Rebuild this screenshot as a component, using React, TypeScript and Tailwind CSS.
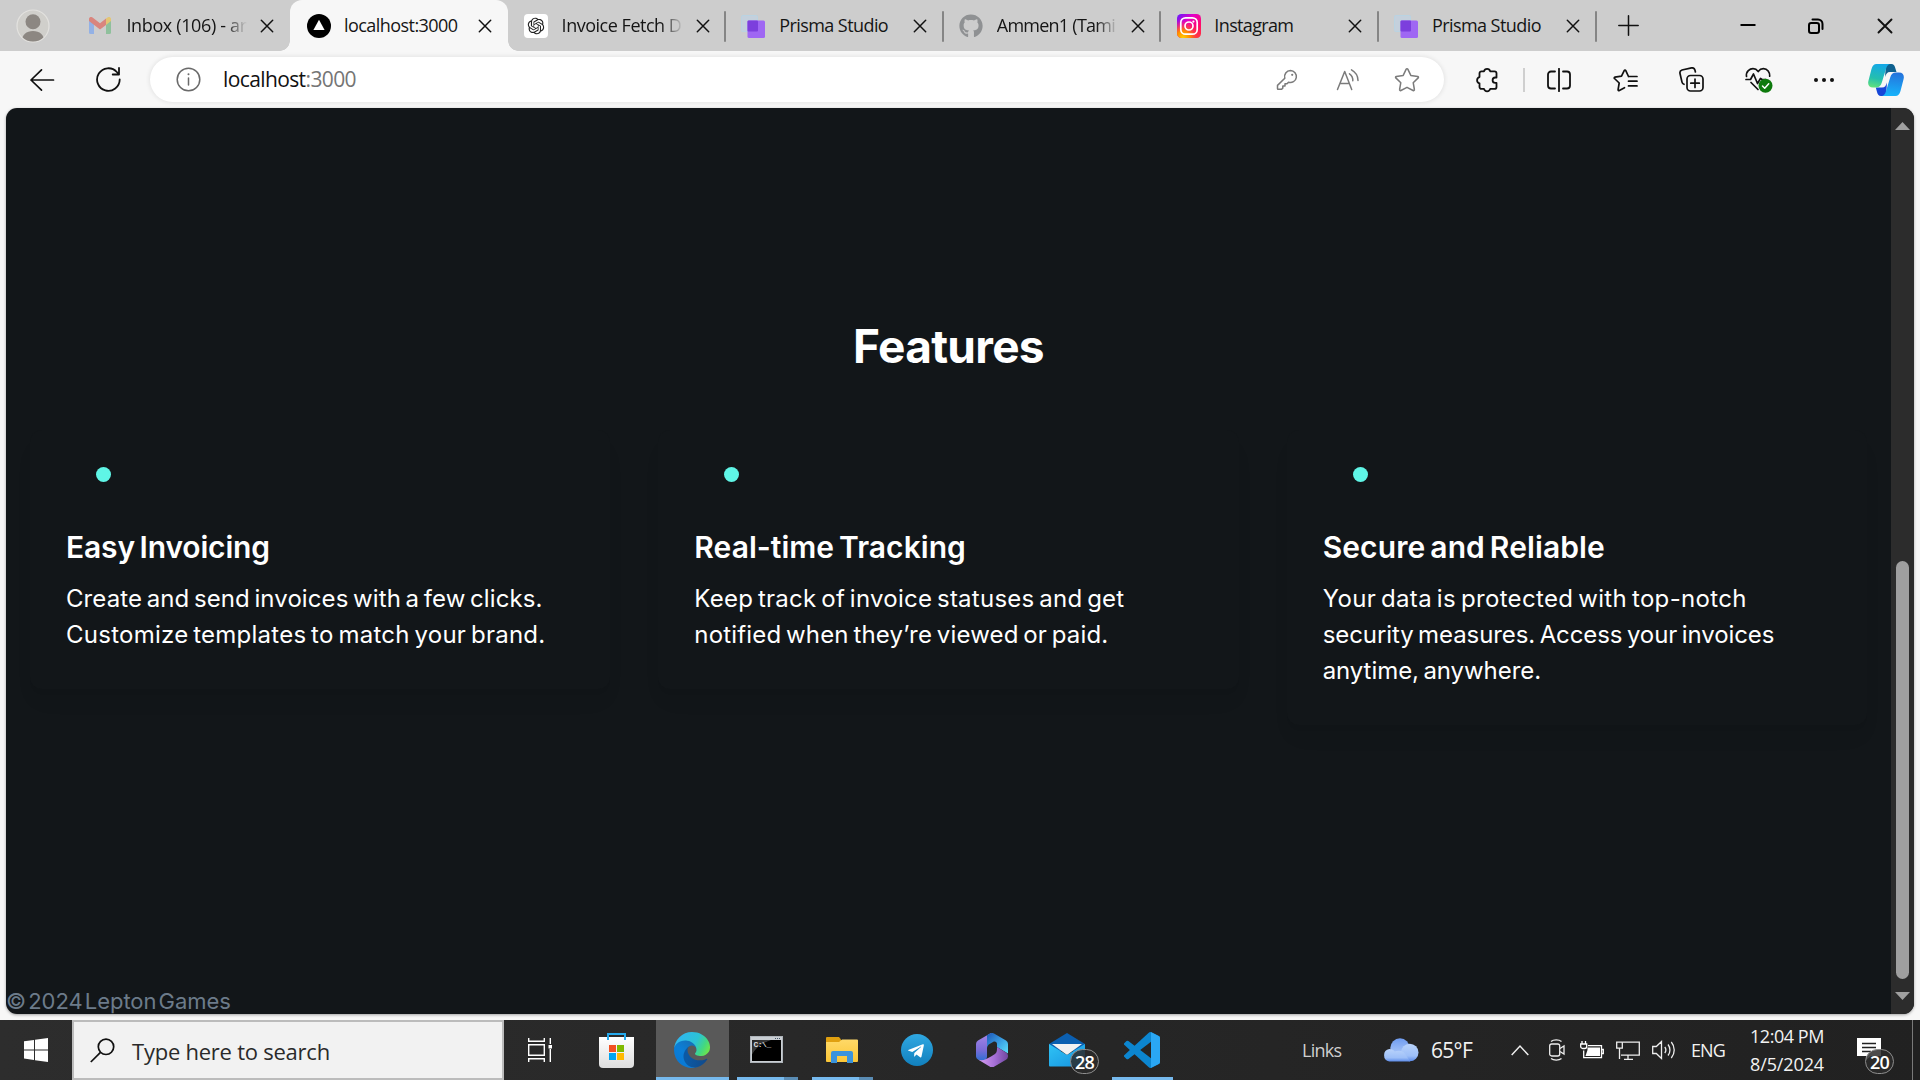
import type { ReactNode } from "react";
import { FaGithub, FaTelegramPlane } from "react-icons/fa";
import { RiOpenaiFill } from "react-icons/ri";

type TabInfo = { title: string; icon: ReactNode; tracking: string; active?: boolean; divider?: boolean; fade?: boolean };

function GmailIcon() {
  return (
    <svg width="22" height="17" viewBox="0 0 22 17" opacity="0.6">
      <path d="M0 2v13.5A1.5 1.5 0 0 0 1.5 17H5V6z" fill="#6da0f5" />
      <path d="M22 2v13.5a1.5 1.5 0 0 1-1.5 1.5H17V6z" fill="#67b97c" />
      <path d="M17 1.5V8l5-4V2c0-2-2.200-2.600-3.600-1.500z" fill="#f3c13a" />
      <path d="M0 2C0 0 2.200-.6 3.600.5L11 6.200 17 1.500V8l-6 4.600L0 4z" fill="#e2564b" />
    </svg>
  );
}

function NextIcon() {
  return (
    <svg width="24" height="24" viewBox="0 0 24 24">
      <circle cx="12" cy="12" r="12" fill="#000" />
      <path d="M12 5.800 17.600 16H6.400z" fill="#fff" />
    </svg>
  );
}

function OpenAiIcon() {
  return (
    <span className="-ml-px flex size-6 items-center justify-center rounded-[4px] bg-white">
      <RiOpenaiFill size={20} color="#222" />
    </span>
  );
}

function PrismaIcon() {
  return (
    <svg className="-ml-px" width="24" height="24" viewBox="0 0 24 24">
      <rect x="0.500" y="1.500" width="16" height="16" rx="1" fill="#c4d0dc" stroke="#b9d3e2" />
      <rect x="6.500" y="6.500" width="17.500" height="17.500" rx="1.500" fill="#9f67f3" />
      <rect x="6.500" y="6.500" width="10.500" height="11" rx="1" fill="#7c3fdd" />
    </svg>
  );
}

function InstagramIcon() {
  return (
    <svg width="24" height="24" viewBox="0 0 24 24" fill="none">
      <defs>
        <linearGradient id="ig-base" x1="0" y1="0" x2="1" y2="1">
          <stop offset="0" stopColor="#5b1cff" />
          <stop offset="0.35" stopColor="#e400c8" />
          <stop offset="0.7" stopColor="#ff0a6c" />
          <stop offset="1" stopColor="#ff3a3a" />
        </linearGradient>
        <radialGradient id="ig-glow" cx="0.25" cy="1" r="0.75">
          <stop offset="0" stopColor="#ffd000" />
          <stop offset="0.4" stopColor="#ff8a00" />
          <stop offset="1" stopColor="#ff2a50" stopOpacity="0" />
        </radialGradient>
      </defs>
      <rect width="24" height="24" rx="4.500" fill="url(#ig-base)" />
      <rect width="24" height="24" rx="4.500" fill="url(#ig-glow)" />
      <rect x="3.800" y="3.800" width="16.400" height="16.400" rx="4.800" stroke="#fff" strokeWidth="1.700" />
      <circle cx="12" cy="12" r="4" stroke="#fff" strokeWidth="1.700" />
      <circle cx="16.400" cy="7.600" r="1.100" fill="#fff" />
    </svg>
  );
}

const tabs: TabInfo[] = [
  { title: "Inbox (106) - ar", icon: <GmailIcon />, tracking: "tracking-[-0.36px]", fade: true },
  { title: "localhost:3000", icon: <NextIcon />, tracking: "tracking-[-0.55px]", active: true },
  { title: "Invoice Fetch D", icon: <OpenAiIcon />, tracking: "tracking-[-0.48px]", divider: true, fade: true },
  { title: "Prisma Studio", icon: <PrismaIcon />, tracking: "tracking-[-0.57px]", divider: true },
  { title: "Ammen1 (Tami", icon: <FaGithub className="-ml-px" size={24} color="#8f9193" />, tracking: "tracking-[-0.75px]", divider: true, fade: true },
  { title: "Instagram", icon: <InstagramIcon />, tracking: "tracking-[-0.65px]", divider: true },
  { title: "Prisma Studio", icon: <PrismaIcon />, tracking: "tracking-[-0.57px]", divider: true },
];

function Cross({ size, stroke }: { size: number; stroke: number }) {
  return (
    <svg width={size} height={size} viewBox="0 0 16 16" stroke="#111" strokeWidth={stroke} strokeLinecap="round">
      <path d="M1.500 1.500l13 13M14.500 1.500l-13 13" />
    </svg>
  );
}

function Tab({ tab }: { tab: TabInfo }) {
  return (
    <div className={`relative flex h-[51px] w-[217.6px] shrink-0 items-center pl-[17px] ${tab.active ? "z-10 rounded-t-[12px] bg-[#f7f7f7]" : ""}`}>
      {tab.active && (
        <>
          <span className="absolute -left-[10px] bottom-0 size-[10px] bg-[radial-gradient(circle_at_0_0,transparent_9.500px,#f7f7f7_10px)]" />
          <span className="absolute -right-[10px] bottom-0 size-[10px] bg-[radial-gradient(circle_at_100%_0,transparent_9.500px,#f7f7f7_10px)]" />
        </>
      )}
      <span className="flex w-6 justify-start">{tab.icon}</span>
      <span
        className={`-mt-px ml-[13px] w-[121px] text-[18px] leading-6 whitespace-nowrap text-[#151515] ${tab.fade ? "[mask-image:linear-gradient(to_right,black_82%,transparent_100%)]" : ""} ${tab.tracking}`}
      >
        {tab.title}
      </span>
      <span className="ml-[13px] flex">
        <Cross size={14} stroke={1.700} />
      </span>
      {tab.divider && <span className="absolute -right-px top-[11px] h-[31px] w-[2px] rounded bg-[#858585]" />}
    </div>
  );
}

function TabBar() {
  return (
    <div className="flex h-[51px] items-center bg-[#cdcdcd]">
      <div className="flex w-[72.4px] shrink-0 justify-start pl-4">
        <svg width="34" height="34" viewBox="0 0 34 34">
          <defs>
            <clipPath id="avatar-clip">
              <circle cx="17" cy="17" r="15.500" />
            </clipPath>
          </defs>
          <circle cx="17" cy="17" r="16" fill="#d0cfcb" stroke="#e3e2df" strokeWidth="1.200" />
          <g clipPath="url(#avatar-clip)" fill="#8c8782">
            <circle cx="17" cy="12.700" r="7.500" />
            <path d="M5.500 34c0-8 4.500-12 11.500-12s11.500 4 11.500 12z" />
          </g>
        </svg>
      </div>
      {tabs.map((tab, i) => (
        <Tab key={i} tab={tab} />
      ))}
      <svg className="-mt-px ml-[22px] shrink-0" width="21" height="21" viewBox="0 0 21 21" stroke="#111" strokeWidth="1.500" strokeLinecap="round">
        <path d="M10.500 .8v19.400M.8 10.500h19.400" />
      </svg>
      <svg className="-mt-px ml-[101px] shrink-0" width="16" height="16" viewBox="0 0 16 16" stroke="#000" strokeWidth="2">
        <path d="M.5 8h15" />
      </svg>
      <svg className="ml-[51px] shrink-0" width="18" height="16" viewBox="0 0 18 16" fill="none" stroke="#000" strokeWidth="2" strokeLinecap="round">
        <rect x="2" y="5" width="10" height="10" rx="2.200" />
        <path d="M5.500 1.500H11a4.500 4.500 0 0 1 4.500 4.500v5" />
      </svg>
      <span className="ml-[52px] flex">
        <Cross size={16} stroke={1.900} />
      </span>
    </div>
  );
}

function Toolbar() {
  return (
    <div className="flex h-[57px] items-start bg-[#f7f7f7] pt-[6px]">
      <div className="flex h-[45px] w-[84px] items-center justify-center">
        <svg width="26" height="24" viewBox="0 0 26 24" fill="none" stroke="#111" strokeWidth="1.700" strokeLinecap="round" strokeLinejoin="round">
          <path d="M24.500 12H2M12.500 1.800 2 12l10.500 10.200" />
        </svg>
      </div>
      <div className="flex h-[45px] w-12 items-center justify-center">
        <svg width="25" height="25" viewBox="0 0 25 25" fill="none" stroke="#111" strokeWidth="1.800" strokeLinecap="round" strokeLinejoin="round">
          <path d="M23.700 12.500A11.300 11.300 0 1 1 20.800 5L23 7.500M23 1v6.500h-6.300" />
        </svg>
      </div>
      <div className="ml-[18px] flex h-[45px] w-[1294px] shrink-0 items-center rounded-full bg-white pl-[26px] shadow-[0_0_4px_1px_rgba(0,0,0,0.08)]">
        <svg width="25" height="25" viewBox="0 0 25 25" fill="none" stroke="#6a6a6a" strokeWidth="1.500">
          <circle cx="12.500" cy="12.500" r="11.300" />
          <path d="M12.500 11v7" strokeLinecap="round" />
          <circle cx="12.500" cy="7.300" r="1" fill="#6a6a6a" stroke="none" />
        </svg>
        <span className="ml-[22px] -mt-[2px] text-[21px] leading-8 tracking-[-0.61px] text-[#111]">
          localhost<span className="text-[#757575]">:3000</span>
        </span>
        <div className="mr-[24px] ml-auto flex items-center text-[#7b7b7b]">
          <svg width="22" height="22" viewBox="0 0 22 22" fill="none" stroke="currentColor" strokeWidth="1.500" strokeLinejoin="round">
            <path d="M14.500 1.500a6 6 0 1 1-2 11.700L11 14.700H9v2.200H6.800v2.200l-1.200 1.200H2.200a.7.700 0 0 1-.7-.7v-3.200l7.300-7.200a6 6 0 0 1 5.700-7.700z" />
            <circle cx="16.200" cy="5.800" r="1.100" fill="currentColor" stroke="none" />
          </svg>
          <svg className="ml-[38px]" width="24" height="23" viewBox="0 0 24 23" fill="none" stroke="currentColor" strokeWidth="1.500" strokeLinecap="round" strokeLinejoin="round">
            <path d="M1.500 21.500 8.700 3.500l7 18M4 15.500h9.300M13.500 5.800a8 8 0 0 1 3.300 7M15.500 1.800c4 2.200 6.500 6.200 6.500 10.700" />
          </svg>
          <svg className="ml-[34px]" width="26" height="25" viewBox="0 0 26 25" fill="none" stroke="currentColor" strokeWidth="1.500" strokeLinejoin="round">
            <path d="M12.200 2.200a.9.900 0 0 1 1.600 0l3 6.200 6.900 1a.9.900 0 0 1 .5 1.500l-5 4.800 1.200 6.800a.9.900 0 0 1-1.300 1L13 20.300l-6.100 3.200a.9.900 0 0 1-1.300-1l1.200-6.800-5-4.800a.9.900 0 0 1 .5-1.500l6.900-1z" />
          </svg>
        </div>
      </div>
      <div className="flex h-[45px] shrink-0 items-center">
        <svg className="ml-[31px]" width="24" height="26" viewBox="0 0 24 26" fill="none" stroke="#111" strokeWidth="1.800" strokeLinejoin="round">
          <path d="M9 4.300a3.200 3.200 0 0 1 6.200 0h4.300a2 2 0 0 1 2 2v4.200h-1.200a2.700 2.700 0 0 0 0 5.400h1.200v4a2 2 0 0 1-2 2h-4.300a3.200 3.200 0 0 1-6.200 0H6.500a2 2 0 0 1-2-2v-3.600a3.200 3.200 0 0 1 0-6.200V6.300a2 2 0 0 1 2-2z" />
        </svg>
        <span className="ml-[24px] h-6 w-[2px] bg-[#cfcfcf]" />
        <svg className="ml-[22px]" width="24" height="24" viewBox="0 0 24 24" fill="none" stroke="#111" strokeWidth="1.800" strokeLinecap="round">
          <path d="M12 .8v22.400M8 3.500H4a3 3 0 0 0-3 3v11a3 3 0 0 0 3 3h4M16 3.500h4a3 3 0 0 1 3 3v11a3 3 0 0 1-3 3h-4" />
        </svg>
        <svg className="ml-[42px]" width="25" height="24" viewBox="0 0 25 24" fill="none" stroke="#111" strokeWidth="1.700" strokeLinecap="round" strokeLinejoin="round">
          <path d="M15.500 8.500 12.800 2.600a.9.900 0 0 0-1.600 0L8.500 8.200l-6.600.9a.8.800 0 0 0-.4 1.400l4.700 4.500-1.100 6.700a.8.800 0 0 0 1.200.8l5.200-2.800M15.500 8.500h8.500M15.500 13.200h8.500M15.500 17.900h8.500" />
        </svg>
        <svg className="ml-[41px]" width="25" height="25" viewBox="0 0 25 25" fill="none" stroke="#111" strokeWidth="1.700" strokeLinecap="round" strokeLinejoin="round">
          <rect x="8" y="8.500" width="16" height="15.500" rx="3.500" />
          <path d="M16 12v8.500M11.800 16.200h8.500M5 17.300a3 3 0 0 1-2-2.200L1 6.500a3 3 0 0 1 2-3.500L12.500.9A3 3 0 0 1 16 3.200l.4 1.800" />
        </svg>
        <svg className="ml-[41px]" width="28" height="26" viewBox="0 0 28 26" fill="none" stroke="#111" strokeWidth="1.700" strokeLinecap="round" strokeLinejoin="round">
          <path d="M1.500 9.500c-.8-5.500 3.500-7.800 6.500-7.800 2.200 0 4 1.200 5.200 2.800 1.200-1.600 3-2.800 5.200-2.800 4 0 6.600 3.500 6.300 7.500M1 12.500h4.500L8.500 7l4 9.500 3-5 1.500 1h4M6 15.500l7 7" />
          <circle cx="20.500" cy="18.800" r="7" fill="#0e7a0d" stroke="none" />
          <path d="M17.500 19l2.200 2.200 4-4.400" stroke="#fff" strokeWidth="1.500" />
        </svg>
        <svg className="ml-[39px]" width="24" height="6" viewBox="0 0 24 6" fill="#111">
          <circle cx="4" cy="3" r="2" />
          <circle cx="12" cy="3" r="2" />
          <circle cx="20" cy="3" r="2" />
        </svg>
        <svg className="ml-[32px]" width="36" height="32" viewBox="0 0 36 32">
          <defs>
            <linearGradient id="cp-left" x1="0.4" y1="0" x2="0.2" y2="1">
              <stop offset="0" stopColor="#14a9e6" />
              <stop offset="0.6" stopColor="#24bfae" />
              <stop offset="1" stopColor="#63e27a" />
            </linearGradient>
            <linearGradient id="cp-right" x1="0.5" y1="0" x2="0.4" y2="1">
              <stop offset="0" stopColor="#2573dc" />
              <stop offset="1" stopColor="#16b4fb" />
            </linearGradient>
          </defs>
          <path d="M18 0h5.500c2 0 3 1.500 3.600 3.500L28.500 8H22c-3 0-4 2-5 5z" fill="#0f618f" />
          <path d="M18 32h-5c-2.500 0-3.500-2-4-4l-1.200-4.500H14c3 0 4-2 5-5z" fill="#1646d8" />
          <path d="M8.500 0H22c-2 .5-3 2-3.700 4l-4.500 14.500c-1 3.200-2.600 5-5.800 5H5c-4 0-5.500-3-4.600-6.500L3.500 5C4.500 1.500 6 0 8.500 0z" fill="url(#cp-left)" />
          <path d="M27.500 32H14c2-.5 3-2 3.700-4l4.500-14.500c1-3.200 2.600-5 5.800-5h3c4 0 5.500 3 4.600 6.500L32.500 27c-1 3.500-2.500 5-5 5z" fill="url(#cp-right)" />
        </svg>
      </div>
    </div>
  );
}

type Line = { text: string; tracking: string };
const features: { title: Line; lines: Line[] }[] = [
  {
    title: { text: "Easy Invoicing", tracking: "tracking-[-0.16px]" },
    lines: [
      { text: "Create and send invoices with a few clicks.", tracking: "tracking-[0.09px]" },
      { text: "Customize templates to match your brand.", tracking: "tracking-[0.25px]" },
    ],
  },
  {
    title: { text: "Real-time Tracking", tracking: "tracking-[0.04px]" },
    lines: [
      { text: "Keep track of invoice statuses and get", tracking: "tracking-[0.25px]" },
      { text: "notified when they’re viewed or paid.", tracking: "tracking-[0.17px]" },
    ],
  },
  {
    title: { text: "Secure and Reliable", tracking: "tracking-[0.1px]" },
    lines: [
      { text: "Your data is protected with top-notch", tracking: "tracking-[0.34px]" },
      { text: "security measures. Access your invoices", tracking: "tracking-[-0.08px]" },
      { text: "anytime, anywhere.", tracking: "tracking-[-0.06px]" },
    ],
  },
];

function Page() {
  return (
    <div className="h-[912px] bg-[#f7f7f7] px-[6px]">
      <div className="flex h-[906px] overflow-hidden rounded-[11px] bg-[#121619] font-['Inter',sans-serif] text-white shadow-[0_1px_3px_rgba(0,0,0,0.35)]">
        <main className="flex w-[1885px] flex-col">
          <h1 className="mt-[208px] text-center text-[46px] leading-[60px] font-bold tracking-[-0.7px]">Features</h1>
          <div className="mt-[54px] grid grid-cols-3 items-start gap-12 px-6">
            {features.map((f) => (
              <section key={f.title.text} className="rounded-[12px] bg-[#121619] p-9 shadow-[0_15px_22px_-5px_rgba(0,0,0,0.05),0_6px_9px_-6px_rgba(0,0,0,0.06)]">
                <div className="mt-px ml-[30px] size-[15px] rounded-full bg-[#5ff5e6]" />
                <h2 className={`mt-[44px] text-[30px] leading-[42px] font-semibold [word-spacing:-2.7px] ${f.title.tracking}`}>{f.title.text}</h2>
                <p className="mt-[13px] text-[24px] leading-9 [word-spacing:-2.2px]">
                  {f.lines.map((l) => (
                    <span key={l.text} className={`block whitespace-nowrap ${l.tracking}`}>
                      {l.text}
                    </span>
                  ))}
                </p>
              </section>
            ))}
          </div>
          <footer className="mt-auto h-[28px] text-[22px] leading-[30px] tracking-[-0.04px] text-[#6c7b8a] [word-spacing:-4px]">© 2024 Lepton Games</footer>
        </main>
        <div className="flex w-[23px] flex-col items-center bg-[#2c2c2c]">
          <svg className="mt-[14px]" width="15" height="8" viewBox="0 0 15 8" fill="#a0a0a0">
            <path d="M7.500 0 15 8H0z" />
          </svg>
          <div className="mt-[431px] mr-[1px] h-[418px] w-[13px] rounded-full bg-[#9f9f9f]" />
          <svg className="mt-[13px]" width="15" height="8" viewBox="0 0 15 8" fill="#a0a0a0">
            <path d="M7.500 8 0 0h15z" />
          </svg>
        </div>
      </div>
    </div>
  );
}

function StoreIcon() {
  return (
    <svg width="35" height="35" viewBox="0 0 35 35">
      <defs>
        <linearGradient id="store-bag" x1="0" y1="0" x2="0" y2="1">
          <stop offset="0" stopColor="#fff" />
          <stop offset="1" stopColor="#dedede" />
        </linearGradient>
      </defs>
      <path d="M0 4h35v27a4 4 0 0 1-4 4H4a4 4 0 0 1-4-4z" fill="url(#store-bag)" />
      <path d="M9 7V1h17v6" fill="none" stroke="#25a9ec" strokeWidth="2" />
      <path d="M10 12h7v7h-7z" fill="#f25022" />
      <path d="M18 12h7v7h-7z" fill="#7fba00" />
      <path d="M10 20h7v7h-7z" fill="#00a4ef" />
      <path d="M18 20h7v7h-7z" fill="#ffb900" />
    </svg>
  );
}

function EdgeIcon() {
  return (
    <svg className="mr-[2px]" width="36" height="36" viewBox="4.600 4.900 256 256">
      <defs>
        <linearGradient id="edge-dark" x1="0.2" y1="0.5" x2="1" y2="0.6">
          <stop offset="0" stopColor="#0c59a4" />
          <stop offset="1" stopColor="#114a8b" />
        </linearGradient>
        <linearGradient id="edge-mid" x1="0.9" y1="0.2" x2="0.3" y2="1">
          <stop offset="0" stopColor="#1670b8" />
          <stop offset="0.5" stopColor="#0b7fd8" />
          <stop offset="1" stopColor="#0a78d4" />
        </linearGradient>
        <linearGradient id="edge-top" x1="0.05" y1="0.3" x2="1" y2="0.65">
          <stop offset="0" stopColor="#2fb6f0" />
          <stop offset="0.55" stopColor="#2cc3d5" />
          <stop offset="0.82" stopColor="#43d880" />
          <stop offset="1" stopColor="#6be34f" />
        </linearGradient>
      </defs>
      <path fill="url(#edge-dark)" d="M235.680 195.460a93.730 93.730 0 0 1-10.540 4.710 101.870 101.870 0 0 1-35.900 6.460c-47.320 0-88.540-32.550-88.540-74.320A31.480 31.480 0 0 1 117.130 105c-42.800 1.800-53.800 46.400-53.800 72.530 0 73.880 68.090 81.370 82.760 81.370 7.910 0 19.840-2.300 27-4.560l1.310-.44a128.340 128.340 0 0 0 66.600-52.800 4 4 0 0 0-5.320-5.640z" />
      <path fill="url(#edge-mid)" d="M110.340 246.340A79.200 79.200 0 0 1 87.600 225a80.720 80.720 0 0 1 29.530-120c3.120-1.470 8.450-4.130 15.540-4a32.350 32.350 0 0 1 25.690 13 31.880 31.880 0 0 1 6.360 18.660c0-.21 24.460-79.600-80-79.600-43.900 0-80 41.660-80 78.210a130.150 130.150 0 0 0 12.110 56 128 128 0 0 0 156.380 67.110 75.550 75.550 0 0 1-62.780-8z" />
      <path fill="url(#edge-top)" d="M156.940 153.780c-.81 1.050-3.300 2.500-3.300 5.660 0 2.610 1.700 5.120 4.720 7.230 14.380 10 41.490 8.680 41.560 8.680a59.560 59.560 0 0 0 30.270-8.350 61.380 61.380 0 0 0 30.430-52.880c.26-22.410-8-37.310-11.340-43.910C228.090 28.760 182.350 4.920 132.610 4.920a128 128 0 0 0-128 126.200c.48-36.540 36.800-66.050 80-66.050 3.500 0 23.460.34 42 10.070 16.340 8.580 24.900 18.940 30.850 29.210 6.180 10.670 7.280 24.150 7.280 29.520s-2.740 13.330-7.800 19.910z" />
    </svg>
  );
}

function TerminalIcon() {
  return (
    <span className="flex h-[27px] w-[33px] flex-col border border-[#aeb4ba] bg-[#c9ced3] px-px pb-px">
      <span className="flex h-[3px] justify-end gap-px pt-px pr-px">
        <i className="size-px bg-[#456]" />
        <i className="size-px bg-[#456]" />
        <i className="size-px bg-[#456]" />
      </span>
      <span className="flex-1 bg-[radial-gradient(ellipse_at_110%_115%,#000_75%,#3a3a3a_77%,#222_100%)] pl-[2px] font-['Liberation_Mono',monospace] text-[8px] leading-[10px] font-bold tracking-[-0.5px] text-[#ddd]">
        C:\_
      </span>
    </span>
  );
}

function ExplorerIcon() {
  return (
    <svg className="mr-[2px]" width="32" height="26" viewBox="0 0 32 26">
      <defs>
        <linearGradient id="folder" x1="0" y1="0" x2="0" y2="1">
          <stop offset="0" stopColor="#ffd968" />
          <stop offset="1" stopColor="#fbc637" />
        </linearGradient>
      </defs>
      <path d="M0 1a1 1 0 0 1 1-1h12l2 2.500V7H0z" fill="#e0a010" />
      <path d="M0 5h13l3-2.500h15a1 1 0 0 1 1 1V24a1 1 0 0 1-1 1H1a1 1 0 0 1-1-1z" fill="url(#folder)" />
      <path d="M5 26V16a2 2 0 0 1 2-2h18a2 2 0 0 1 2 2v10h-6v-7H11v7z" fill="#3a93dc" />
    </svg>
  );
}

function TelegramIcon() {
  return (
    <span className="flex size-8 items-center justify-center rounded-full bg-linear-to-b from-[#2fa8e2] to-[#1180bd]">
      <FaTelegramPlane size={18} color="#fff" className="mr-[3px] mt-px" />
    </span>
  );
}

function OfficeIcon() {
  return (
    <svg width="32" height="34" viewBox="0 0 32 34">
      <defs>
        <linearGradient id="m365-a" x1="0" y1="0" x2="0" y2="1">
          <stop offset="0" stopColor="#a987e8" />
          <stop offset="0.600" stopColor="#7a6cd8" />
          <stop offset="1" stopColor="#2b6fd4" />
        </linearGradient>
        <linearGradient id="m365-b" x1="0" y1="0" x2="1" y2="1">
          <stop offset="0" stopColor="#1c56b8" />
          <stop offset="0.600" stopColor="#3faae8" />
          <stop offset="1" stopColor="#5fe0fa" />
        </linearGradient>
        <linearGradient id="m365-c" x1="0" y1="0" x2="1" y2="0">
          <stop offset="0" stopColor="#dba1f3" />
          <stop offset="0.550" stopColor="#a56fd6" />
          <stop offset="1" stopColor="#70479f" />
        </linearGradient>
      </defs>
      <path d="M15 0 2 7.500A4 4 0 0 0 0 11v12.500a3.500 3.500 0 0 0 2 3l3 1.300c2.500 1 6-.5 6-4V13c0-2 1-3.500 2.500-4.400z" fill="url(#m365-a)" />
      <path d="M11 2.300 14 .5a4 4 0 0 1 4 0l12 7A4 4 0 0 1 32 11v9.500L21 14V11c0-2-2-3-4-2l-3.500 2c-1.500 1-2.500 2.500-2.500 4.500z" fill="url(#m365-b)" />
      <path d="M2 26.500c4 2 9-.5 13-3l4-2.500c2-1.300 2-3.500 2-7l9 5.400c2 1.200 2 2.600 2 4a4 4 0 0 1-2 3.300l-12 7a4 4 0 0 1-4 0z" fill="url(#m365-c)" />
    </svg>
  );
}

function MailIcon() {
  return (
    <svg className="mb-px" width="36" height="34" viewBox="0 0 36 34">
      <defs>
        <linearGradient id="mail-body" x1="0" y1="0" x2="1" y2="1">
          <stop offset="0" stopColor="#30c3f5" />
          <stop offset="1" stopColor="#1592df" />
        </linearGradient>
      </defs>
      <path d="M0 11 18 0l18 11v7H0z" fill="#0b5fb0" />
      <path d="M3 11h30L18 22z" fill="#f1f1f1" />
      <path d="M0 11l18 11L36 11v21.500a1 1 0 0 1-1 1H1a1 1 0 0 1-1-1z" fill="url(#mail-body)" />
    </svg>
  );
}

function CodeIcon() {
  return (
    <svg width="36" height="36" viewBox="0 0 24 24">
      <path
        fill="#0c86d0"
        d="M23.150 2.587L18.210.21a1.494 1.494 0 0 0-1.705.29l-9.460 8.630-4.120-3.128a.999.999 0 0 0-1.276.057L.327 7.261A1 1 0 0 0 .326 8.740L3.899 12 .326 15.260a1 1 0 0 0 .001 1.479L1.650 17.940a.999.999 0 0 0 1.276.057l4.120-3.128 9.460 8.630a1.492 1.492 0 0 0 1.704.29l4.942-2.377A1.500 1.500 0 0 0 24 20.060V3.939a1.500 1.500 0 0 0-.85-1.352zm-5.146 14.861L10.826 12l7.178-5.448v10.896z"
      />
      <path fill="#2aa7f4" d="M18 .15a1.500 1.500 0 0 1 .21.06l4.940 2.377A1.500 1.500 0 0 1 24 3.939V20.060a1.500 1.500 0 0 1-.85 1.352l-4.940 2.377a1.500 1.500 0 0 1-.21.06z" />
    </svg>
  );
}

function CountBadge({ children, className }: { children: ReactNode; className: string }) {
  return (
    <span className={`absolute flex h-[25px] w-[29px] items-center justify-center rounded-full border border-[#8d8d8d] bg-[#2b2b2b]/85 text-[18px] leading-none font-semibold tracking-[-0.7px] text-white ${className}`}>
      {children}
    </span>
  );
}

function AppButton({ children, className, bar }: { children: ReactNode; className: string; bar?: ReactNode }) {
  return (
    <div className={`relative flex h-[60px] shrink-0 items-center justify-center ${className}`}>
      {children}
      {bar && <div className="absolute inset-x-0 bottom-0 flex h-[3px]">{bar}</div>}
    </div>
  );
}

const fullBar = <span className="flex-1 bg-[#76b9ed]" />;
const splitBar = (
  <>
    <span className="flex-1 bg-[#76b9ed]" />
    <span className="w-[14px] bg-[#5a8cb4]" />
  </>
);

function Taskbar() {
  return (
    <div className="flex h-[60px] items-center bg-linear-to-r from-[#2d2d2d] to-[#212121] text-[#f2f2f2]">
      <div className="flex w-[72px] shrink-0 justify-center">
        <svg width="24" height="24" viewBox="0 0 24 24" fill="#fff">
          <path d="M0 3.300l10-1.400v9.500H0zM11 1.700 24 0v11.400H11zM0 12.500h10V22L0 20.600zM11 12.500h13V24l-13-1.800z" />
        </svg>
      </div>
      <div className="flex h-[60px] w-[432px] shrink-0 items-center border-2 border-[#bcbcbc] bg-[#f2f2f2] pl-4">
        <svg width="25" height="25" viewBox="0 0 25 25" fill="none" stroke="#111" strokeWidth="1.700">
          <circle cx="16" cy="8.800" r="7.700" />
          <path d="M10.500 14.300.8 24" />
        </svg>
        <span className="mt-px ml-[17px] text-[22px] leading-8 tracking-[-0.24px] text-[#2a2a2a]">Type here to search</span>
      </div>
      <svg className="ml-6 shrink-0" width="24" height="24" viewBox="0 0 24 24" fill="none" stroke="#fff" strokeWidth="1.400">
        <path d="M.7 0v3.300h15.600V0M.7 24v-3.300h15.600V24M.7 6.700h15.600v10.600H.7zM22.300 0v6M22.300 11v13" />
        <path d="M20.500 7h3.500v3.500h-3.500z" fill="#fff" stroke="none" />
      </svg>
      <AppButton className="ml-[47px] w-[35px]">
        <StoreIcon />
      </AppButton>
      <AppButton className="ml-[22px] w-[73px] bg-[#595959]" bar={fullBar}>
        <EdgeIcon />
      </AppButton>
      <AppButton className="ml-2 w-[61px] pr-[3px] pb-[2px]" bar={splitBar}>
        <TerminalIcon />
      </AppButton>
      <AppButton className="ml-[14px] w-[61px]" bar={splitBar}>
        <ExplorerIcon />
      </AppButton>
      <AppButton className="ml-7 w-8">
        <TelegramIcon />
      </AppButton>
      <AppButton className="ml-[43px] w-8">
        <OfficeIcon />
      </AppButton>
      <AppButton className="ml-[41px] w-9">
        <MailIcon />
        <CountBadge className="top-[29px] left-[21px]">28</CountBadge>
      </AppButton>
      <AppButton className="ml-[27px] w-[61px] pr-[1px]" bar={fullBar}>
        <CodeIcon />
      </AppButton>
      <span className="ml-[129px] w-[42px] text-[18px] tracking-[-0.75px] text-[#cfcfcf]">Links</span>
      <svg className="ml-[38px] shrink-0" width="37" height="24" viewBox="0 0 38 24">
        <defs>
          <linearGradient id="cloud-back" x1="0" y1="0" x2="0" y2="1">
            <stop offset="0" stopColor="#6f9cf0" />
            <stop offset="1" stopColor="#b7d0fa" />
          </linearGradient>
          <linearGradient id="cloud-front" x1="0" y1="0" x2="0" y2="1">
            <stop offset="0" stopColor="#b9d3fb" />
            <stop offset="0.700" stopColor="#9dbff8" />
            <stop offset="1" stopColor="#5c8be8" />
          </linearGradient>
        </defs>
        <circle cx="18.500" cy="10" r="10" fill="url(#cloud-back)" />
        <circle cx="28.500" cy="14.500" r="9" fill="url(#cloud-front)" />
        <path d="M7.500 11c3 0 4.500 1 5.500 2.500 5-2 10-.5 12 4.500l4 5.800H7.500a6.500 6.500 0 0 1 0-12.800z" fill="url(#cloud-front)" />
      </svg>
      <span className="mt-[2px] ml-[12px] w-[46px] text-[21px] tracking-[-0.7px]">65°F</span>
      <svg className="ml-[34px] shrink-0" width="18" height="12" viewBox="0 0 18 12" fill="none" stroke="#eee" strokeWidth="1.500">
        <path d="M.7 11 9 2l8.300 9" />
      </svg>
      <svg className="ml-[20px] shrink-0" width="16" height="22" viewBox="0 0 16 22" fill="none" stroke="#eee" strokeWidth="1.300">
        <rect x=".7" y="5" width="10" height="12" rx="2" />
        <path d="M11 9.500l4-2.500v8l-4-2.500M2 2.500c2.500-2.200 8-2.200 10.500 0M2 19.500c2.500 2.200 8 2.200 10.500 0" />
      </svg>
      <svg className="ml-[15px] shrink-0" width="24" height="18" viewBox="0 0 24 18" fill="none" stroke="#fff" strokeWidth="1.300">
        <path d="M8 4.700h13.500v12H3.700V9.500M21.500 8.500h1.800v4h-1.800M2 0v3M5.500 0v3M.7 3h6v2.500a2 2 0 0 1-2 2h-2a2 2 0 0 1-2-2z" />
        <path d="M7.500 6.500H20V15H5.500l2-6z" fill="#fff" stroke="none" />
      </svg>
      <svg className="ml-[12px] shrink-0" width="24" height="19" viewBox="0 0 24 19" fill="none" stroke="#eee" strokeWidth="1.300">
        <path d="M7 1.200h16.300v13H5M12 14.500v3.500M8 18.300h9M.7 1.200h5.600v6H.7zM3.500 7.500V18" />
      </svg>
      <svg className="ml-[12px] shrink-0" width="24" height="20" viewBox="0 0 24 20" fill="none" stroke="#eee" strokeWidth="1.300">
        <path d="M.7 6.500h3.600L9.500 1.500v17l-5.200-5H.7zM12.800 7c1.300 1.800 1.300 4.200 0 6M16 4.500c2.600 3.200 2.600 7.800 0 11M19.300 2c3.900 4.700 3.900 11.300 0 16" />
      </svg>
      <span className="ml-[15px] w-[36px] text-[18px] tracking-[-0.9px]">ENG</span>
      <div className="ml-[23px] flex w-[78px] shrink-0 flex-col items-start text-[18px] leading-[28px] whitespace-nowrap">
        <span className="tracking-[-0.45px]">12:04 PM</span>
        <span className="tracking-[-0.12px]">8/5/2024</span>
      </div>
      <div className="relative ml-[29px] flex h-[60px] w-6 shrink-0 items-start pt-[18px]">
        <svg width="24" height="22" viewBox="0 0 24 22">
          <path d="M0 0h24v18H14l-5 4v-4H0z" fill="#fff" />
          <path d="M5 5.500h14M5 9.500h14M5 13.500h9" stroke="#222" strokeWidth="1.300" />
        </svg>
        <CountBadge className="top-[29px] left-[8px]">20</CountBadge>
      </div>
      <span className="ml-auto mr-[7px] h-[60px] w-px shrink-0 bg-[#7a7a7a]" />
    </div>
  );
}

export default function App() {
  return (
    <div className="flex h-[1080px] w-[1920px] flex-col overflow-hidden font-['Open_Sans',sans-serif]">
      <TabBar />
      <Toolbar />
      <Page />
      <Taskbar />
    </div>
  );
}
